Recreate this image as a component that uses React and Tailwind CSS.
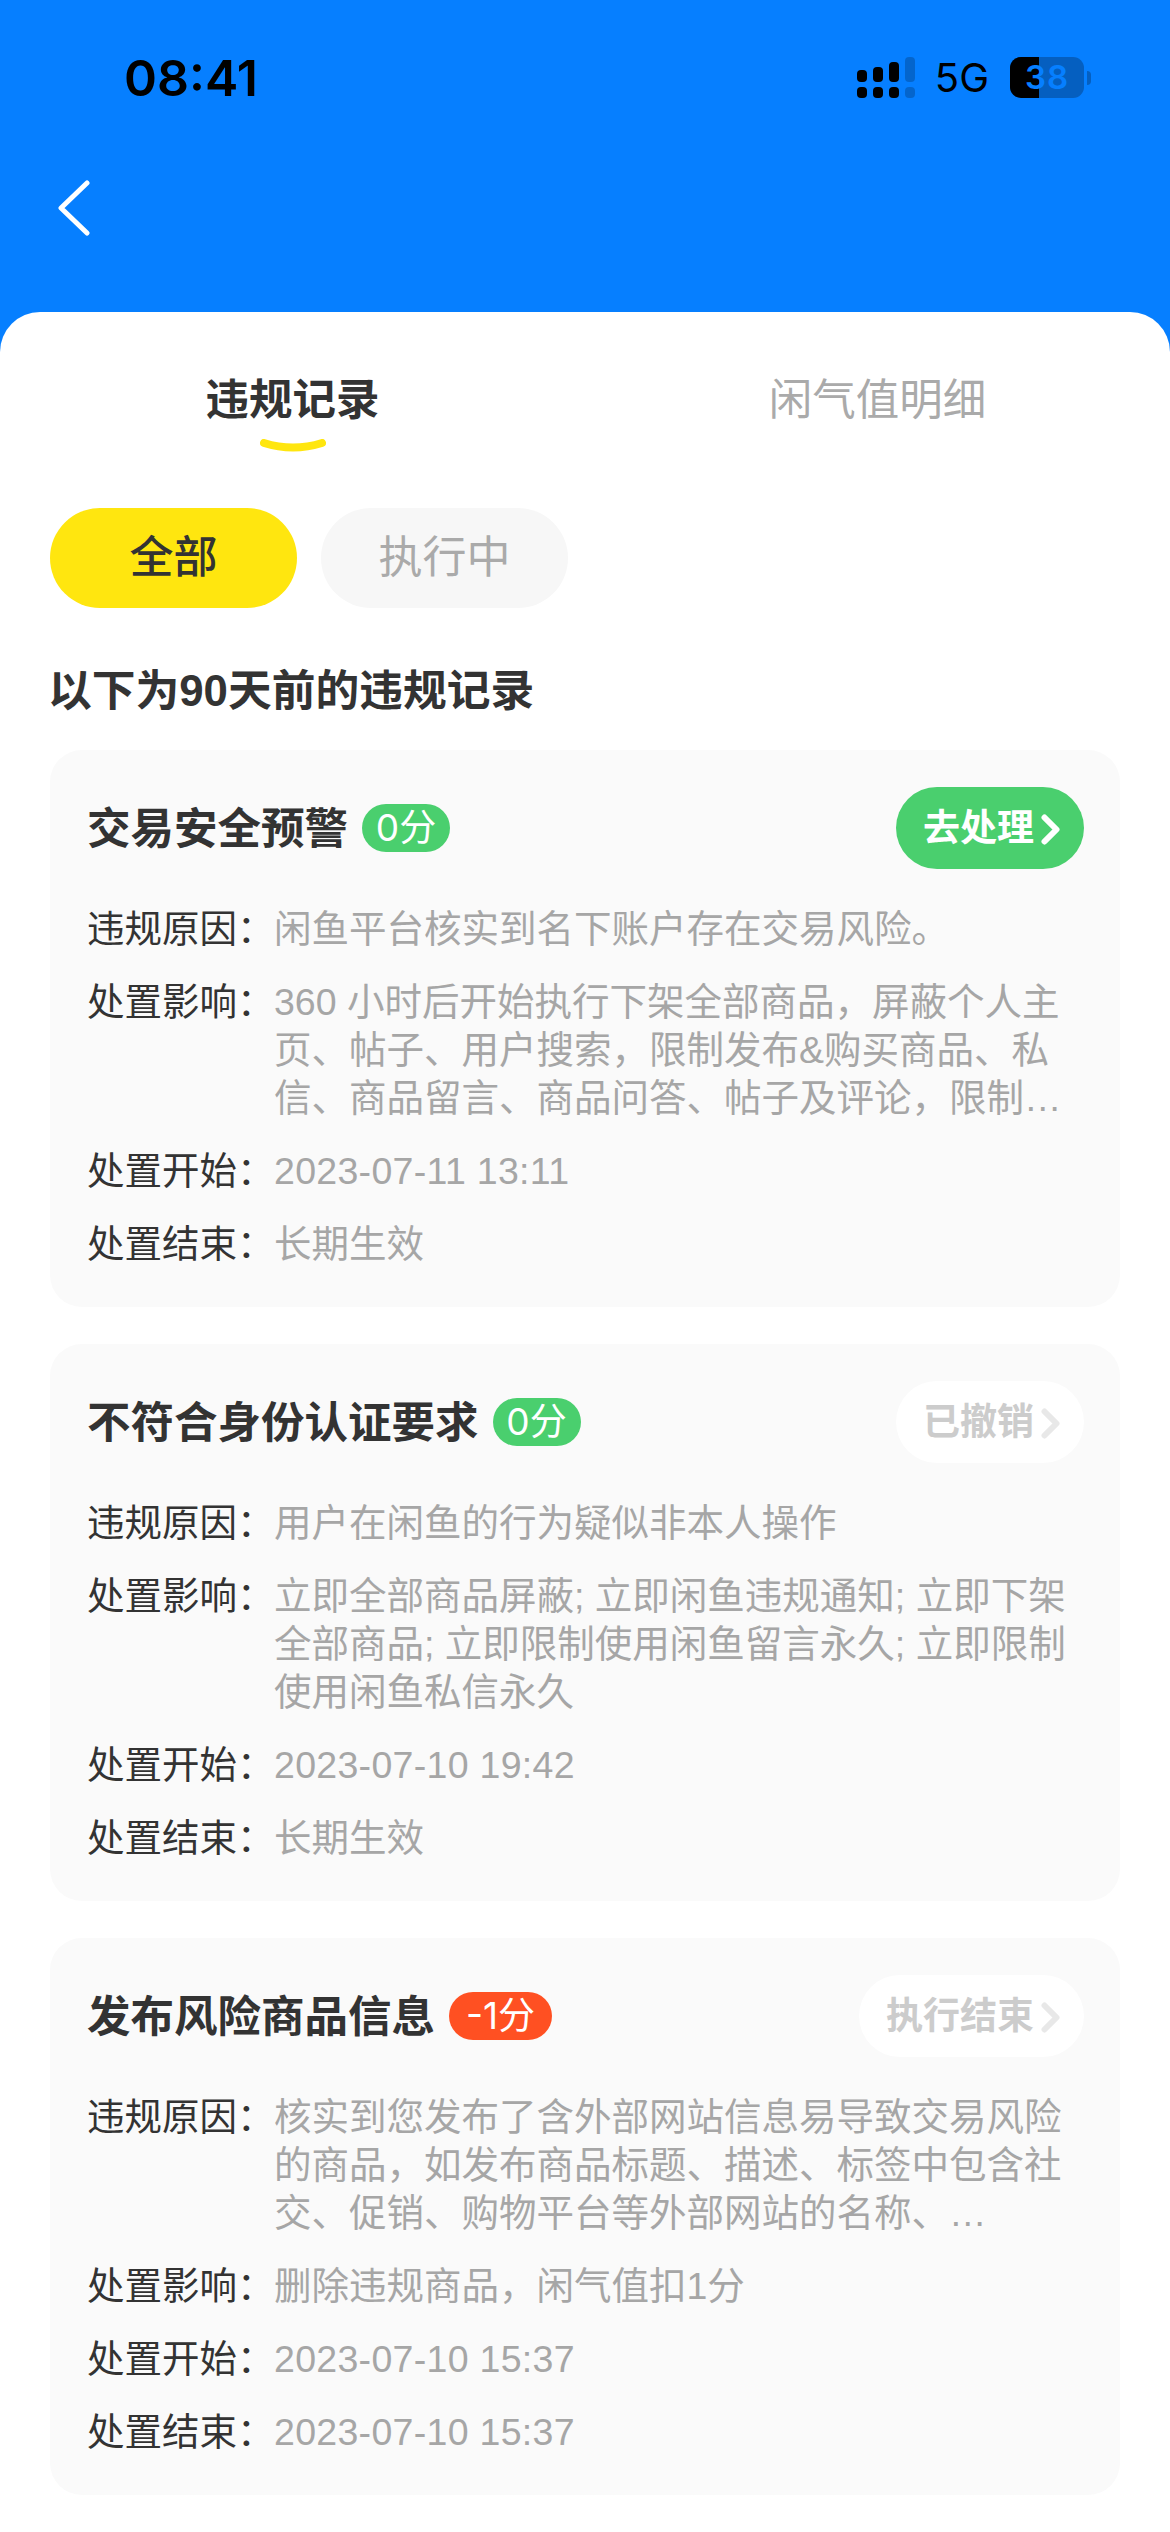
import React from 'react';

const records = [
  {
    title: '交易安全预警',
    score: '0分',
    scoreClass: 'bg-[#4acf6e] w-[88px]',
    action: '去处理',
    active: true,
    rows: [
      ['违规原因', '闲鱼平台核实到名下账户存在交易风险。'],
      ['处置影响', '360 小时后开始执行下架全部商品，屏蔽个人主页、帖子、用户搜索，限制发布&购买商品、私信、商品留言、商品问答、帖子及评论，限制…'],
      ['处置开始', '2023-07-11 13:11'],
      ['处置结束', '长期生效'],
    ],
  },
  {
    title: '不符合身份认证要求',
    score: '0分',
    scoreClass: 'bg-[#4acf6e] w-[88px]',
    action: '已撤销',
    rows: [
      ['违规原因', '用户在闲鱼的行为疑似非本人操作'],
      ['处置影响', '立即全部商品屏蔽; 立即闲鱼违规通知; 立即下架全部商品; 立即限制使用闲鱼留言永久; 立即限制使用闲鱼私信永久'],
      ['处置开始', '2023-07-10 19:42'],
      ['处置结束', '长期生效'],
    ],
  },
  {
    title: '发布风险商品信息',
    score: '-1分',
    scoreClass: 'bg-[#ff5022] w-[103px]',
    action: '执行结束',
    rows: [
      ['违规原因', '核实到您发布了含外部网站信息易导致交易风险的商品，如发布商品标题、描述、标签中包含社交、促销、购物平台等外部网站的名称、…'],
      ['处置影响', '删除违规商品，闲气值扣1分'],
      ['处置开始', '2023-07-10 15:37'],
      ['处置结束', '2023-07-10 15:37'],
    ],
  },
];

const SignalIcon = () => (
  <svg width="58" height="41" viewBox="0 0 58 41" fill="#000">
    <rect x="0" y="13" width="10" height="12" rx="4" />
    <rect x="16" y="10" width="10" height="15" rx="4" />
    <rect x="32" y="5" width="10" height="20" rx="4" />
    <rect x="48" y="0" width="10" height="25" rx="4" fillOpacity="0.2" />
    <rect x="0" y="30" width="10" height="11" rx="4" />
    <rect x="16" y="30" width="10" height="11" rx="4" />
    <rect x="32" y="30" width="10" height="11" rx="4" />
    <rect x="48" y="30" width="10" height="11" rx="4" fillOpacity="0.2" />
  </svg>
);

const Battery = () => (
  <div className="flex items-center">
    <div className="relative w-[74px] h-[41px] rounded-[11px] overflow-hidden bg-[#055fc0] flex items-center justify-center">
      <div className="absolute left-0 top-0 bottom-0 w-[29px] bg-black" />
      <span className="relative text-[33px] font-semibold leading-none tracking-[1px] text-[#067fff]">38</span>
    </div>
    <div className="w-[4px] h-[14px] ml-[3px] rounded-r-full bg-[#055fc0]" />
  </div>
);

const Chevron = ({ color }) => (
  <svg width="19" height="31" viewBox="0 0 19 31" fill="none" stroke={color} strokeWidth="6" strokeLinecap="round" strokeLinejoin="round">
    <path d="M3.5 3.5 L15.5 15.5 L3.5 27.5" />
  </svg>
);

const Row = ({ label, value }) => {
  // dates run a touch wider than the default digits
  const isDate = /^\d{4}-/.test(value);
  return (
    <div className="flex text-[37.5px] leading-[48px]">
      <div className="w-[187px] shrink-0 whitespace-nowrap text-[#333]">{label}：</div>
      <div className={`flex-1 text-[#a6a6a6] ${isDate ? 'tracking-[0.3px]' : ''}`}>{value}</div>
    </div>
  );
};

const RecordCard = ({ record }) => (
  <div className="h-[557px] rounded-[32px] bg-[#fafafa] pt-[37px] pl-[37px] pr-[36px]">
    <div className="flex items-center justify-between h-[82px]">
      <div className="flex items-center gap-[14px]">
        <span className="text-[43.5px] font-semibold text-[#333] leading-[56px] pt-[2px]">{record.title}</span>
        <span className={`${record.scoreClass} h-[48px] rounded-full flex items-center justify-center font-['Inter','Noto_Sans_CJK_SC',sans-serif] text-[37px] text-white`}>
          {record.score}
        </span>
      </div>
      <div className={`h-[82px] rounded-full pl-[27px] pr-[24px] pt-[2px] flex items-center gap-[7px] text-[37px] font-semibold ${record.active ? 'bg-[#4acf6e] text-white' : 'bg-white text-[#cccccc]'}`}>
        {record.action}
        <Chevron color={record.active ? '#ffffff' : '#e8e8e8'} />
      </div>
    </div>
    <div className="mt-[36px] flex flex-col gap-[25px]">
      {record.rows.map(([label, value]) => (
        <Row key={label} label={label} value={value} />
      ))}
    </div>
  </div>
);

export default function App() {
  return (
    <div className="h-[2532px] overflow-hidden bg-[#067fff] font-['Liberation_Sans','Noto_Sans_CJK_SC',sans-serif]">
      {/* status bar + back button */}
      <div className="h-[312px]">
        <div className="flex items-center justify-between h-[41px] pt-[57px] box-content pl-[124px] pr-[79px] font-['Inter',sans-serif]">
          <span className="text-[50px] font-semibold leading-none text-black">08:41</span>
          <div className="flex items-center">
            <SignalIcon />
            <span className="ml-[20px] mr-[21px] text-[40px] leading-none text-black">5G</span>
            <Battery />
          </div>
        </div>
        <div className="pl-[58px] pt-[82px]">
          <svg width="32" height="56" viewBox="0 0 32 56" fill="none" stroke="#ffffff" strokeWidth="5" strokeLinecap="round" strokeLinejoin="round">
            <path d="M29 3 L3 28 L29 53" />
          </svg>
        </div>
      </div>

      {/* white sheet */}
      <div className="h-[2220px] rounded-t-[40px] bg-white">
        <div className="grid grid-cols-2 h-[196px] pt-[62px]">
          <div className="flex flex-col items-center">
            <span className="text-[43.5px] font-semibold leading-[52px] text-[#333]">违规记录</span>
            <svg className="mt-[13px]" width="66" height="14" viewBox="0 0 66 14" fill="none" stroke="#ffe60f" strokeWidth="8" strokeLinecap="round">
              <path d="M4 4 Q33 13 62 4" />
            </svg>
          </div>
          <div className="flex justify-center">
            <span className="text-[43.5px] leading-[52px] text-[#aaaaaa]">闲气值明细</span>
          </div>
        </div>

        <div className="px-[50px]">
          <div className="flex gap-[24px]">
            <div className="w-[247px] h-[100px] rounded-full bg-[#ffe60f] flex items-center justify-center text-[44px] font-medium text-[#333]">全部</div>
            <div className="w-[247px] h-[100px] rounded-full bg-[#f7f7f7] flex items-center justify-center text-[44px] text-[#aaaaaa]">执行中</div>
          </div>
          <div className="mt-[55px] -ml-[2px] text-[43.75px] font-semibold leading-[56px] text-[#333]">以下为90天前的违规记录</div>
          <div className="mt-[31px] flex flex-col gap-[37px]">
            {records.map((record) => (
              <RecordCard key={record.title} record={record} />
            ))}
          </div>
        </div>
      </div>
    </div>
  );
}
